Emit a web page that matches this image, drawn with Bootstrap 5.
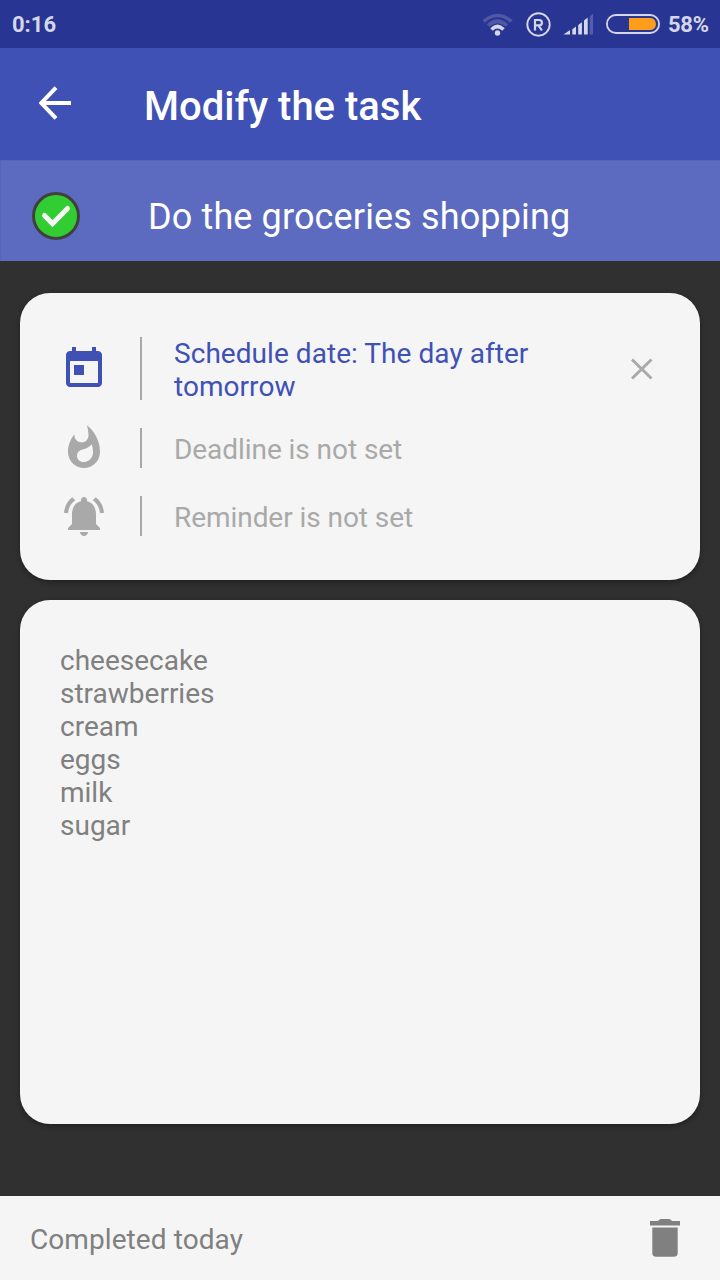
<!DOCTYPE html>
<html lang="en">
<head>
<meta charset="utf-8">
<meta name="viewport" content="width=device-width, initial-scale=1">
<title>Modify the task</title>
<link href="https://cdn.jsdelivr.net/npm/bootstrap@5.3.0/dist/css/bootstrap.min.css" rel="stylesheet">
<style>
  body { font-family: Roboto, sans-serif; background: #303030; height: 1280px; overflow: hidden; }
  svg { display: block; flex: none; }
  .status { height: 48px; background: #283593; color: #d4d7e9; font-size: 22px; font-weight: 700; line-height: 26px; padding: 2px 12px 0 12px; }
  .percent { width: 40px; margin-left: 8px; letter-spacing: -.3px; white-space: nowrap; }
  .appbar { height: 112px; background: #3f51b5; padding-left: 39px; }
  .appbar h1 { font-size: 40px; font-weight: 500; line-height: 48px; margin: 6px 0 0 72px; }
  .back { margin-top: -3px; }
  .task-title { height: 101px; background: #5c6bc0; padding-left: 32px; box-shadow: inset 1px 1px 0 #5565b9; }
  .task-title h2 { font-size: 36px; font-weight: 400; line-height: 44px; letter-spacing: .13px; margin: 12px 0 0 68px; }
  .task-check { margin-top: 11px; }
  .sheet { background: #f5f5f5; border: 0; border-radius: 30px; box-shadow: 0 2px 5px rgba(0,0,0,.35); }
  .dates { height: 287px; padding: 44px 46px 44px 40px; gap: 28px; color: #a9a9a9; font-size: 28px; line-height: 33px; }
  .entry { height: 40px; }
  .entry.tall { height: 63px; }
  .entry .rule { width: 2px; margin: 0 32px; background: #a9a9a9; }
  .label { padding-top: 2px; letter-spacing: -.06px; }
  .chosen { color: #3f51b5; letter-spacing: .05px; }
  .notes { height: 524px; padding: 44px 40px; color: #808080; font-size: 28px; line-height: 33px; }
  .bottom { height: 84px; background: #f5f5f5; color: #808080; font-size: 28px; line-height: 33px; letter-spacing: .08px; padding: 2px 40px 0 30px; }
  .trash { margin-top: -2px; }
</style>
</head>
<body class="d-flex flex-column">
  <div class="status d-flex align-items-center justify-content-between">
    <span>0:16</span>
    <div class="d-flex align-items-center">
      <svg width="124" height="28" viewBox="480 10 124 28" fill="none" stroke="#d4d7e9">
        <g stroke-width="3.6">
          <path d="M483.500 20.500Q497.500 8.500 511.500 20.500" opacity=".22"/>
          <path d="M488 24.500Q497.500 16 507 24.500" opacity=".22"/>
          <path d="M491.500 28.500Q497.500 22.500 503.500 28.500"/>
        </g>
        <circle cx="497.500" cy="32" r="2.700" fill="#d4d7e9" stroke="none"/>
        <circle cx="538.500" cy="23.500" r="11.200" stroke-width="1.900"/>
        <path d="M535 29.500V19h4.200a2.700 2.700 0 0 1 0 5.400H535M538.500 24.400l3.400 5.100" stroke-width="2.200"/>
        <g fill="#d4d7e9" stroke="none" transform="translate(0 -1)">
          <path d="M563.500 34.500l6.500-4.500v4.500zM572.300 29.200l3.700-2.600v7.900h-3.700zM578.200 25l3.700-2.800v12.300h-3.700zM584 20.400l3.700-2.900v17H584z"/>
          <path d="M589.700 16.500l3.300-2.500v20.500h-3.300z" opacity=".25"/>
        </g>
      </svg>
      <svg width="56" height="24" viewBox="604 13 56 24">
        <rect x="606.900" y="15" width="52.200" height="18" rx="9" fill="none" stroke="#d4d7e9" stroke-width="1.800"/>
        <path d="M629 18h20a6 6 0 0 1 7 6a6 6 0 0 1-7 6h-20z" fill="#ff9e1b"/>
      </svg>
      <span class="percent">58%</span>
    </div>
  </div>

  <header class="appbar d-flex align-items-center text-white">
    <svg class="back" width="33" height="34" viewBox="0 0 33 34" fill="none" stroke="#fff" stroke-width="4"><path d="M32 17H3M17 1.700L2.200 17 17 32.300"/></svg>
    <h1>Modify the task</h1>
  </header>

  <section class="task-title d-flex align-items-center text-white">
    <svg class="task-check" width="48" height="48" viewBox="0 0 48 48"><circle cx="24" cy="24" r="22.500" fill="#32cd32" stroke="#404040" stroke-width="3"/><path d="M12.500 23.500l8 8.200L35.500 16.500" fill="none" stroke="#f8f8f8" stroke-width="5" stroke-linecap="round"/></svg>
    <h2 class="task-name">Do the groceries shopping</h2>
  </section>

  <main class="d-flex flex-column flex-grow-1" style="padding:32px 20px 0;gap:20px">
    <div class="card sheet dates">
      <div class="entry tall d-flex">
        <svg class="align-self-center" width="48" height="48" viewBox="0 0 24 24" fill="#3f51b5"><path d="M19 3h-1V1h-2v2H8V1H6v2H5c-1.110 0-1.990.9-1.990 2L3 19c0 1.100.89 2 2 2h14c1.100 0 2-.9 2-2V5c0-1.100-.9-2-2-2zm0 16H5V8h14v11zM7 10h5v5H7z"/></svg>
        <div class="rule"></div>
        <div class="label chosen align-self-center flex-grow-1">Schedule date: The day after<br>tomorrow</div>
        <svg class="align-self-center" width="24" height="24" viewBox="0 0 24 24" fill="none" stroke="#a9a9a9" stroke-width="3"><path d="M2 2.500l19.500 19M21.500 2.500l-19.500 19"/></svg>
      </div>
      <div class="entry d-flex">
        <svg class="align-self-center" width="48" height="48" viewBox="0 0 24 24" fill="#a9a9a9"><path d="M13.500.67s.74 2.650.74 4.800c0 2.060-1.350 3.730-3.410 3.730-2.070 0-3.630-1.670-3.630-3.730l.03-.36C5.210 7.510 4 10.620 4 14c0 4.420 3.580 8 8 8s8-3.580 8-8C20 8.610 17.410 3.800 13.500.67zM11.710 19c-1.780 0-3.220-1.400-3.220-3.140 0-1.620 1.050-2.760 2.810-3.120 1.770-.36 3.600-1.210 4.620-2.580.39 1.290.59 2.650.59 4.040 0 2.650-2.150 4.800-4.800 4.800z"/></svg>
        <div class="rule"></div>
        <div class="label align-self-center">Deadline is not set</div>
      </div>
      <div class="entry d-flex">
        <svg class="align-self-center" width="48" height="48" viewBox="0 0 24 24" fill="#a9a9a9"><path d="M7.580 4.080L6.150 2.650C3.750 4.480 2.170 7.300 2.030 10.500h2c.15-2.650 1.510-4.970 3.550-6.420zm12.390 6.420h2c-.15-3.200-1.730-6.020-4.120-7.850l-1.420 1.430c2.020 1.450 3.390 3.770 3.540 6.420zM18 11c0-3.070-1.640-5.640-4.500-6.320V4c0-.83-.67-1.500-1.500-1.500s-1.500.67-1.500 1.500v.68C7.630 5.360 6 7.920 6 11v5l-2 2v1h16v-1l-2-2v-5zm-6 11c1.100 0 2-.9 2-2h-4c0 1.100.9 2 2 2z"/></svg>
        <div class="rule"></div>
        <div class="label align-self-center">Reminder is not set</div>
      </div>
    </div>
    <div class="card sheet notes">
      <div>cheesecake<br>strawberries<br>cream<br>eggs<br>milk<br>sugar</div>
    </div>
  </main>

  <footer class="bottom d-flex align-items-center justify-content-between">
    <span>Completed today</span>
    <svg class="trash" width="30" height="38" viewBox="0 0 30 38" fill="#808080"><path d="M0 2h8q1.500-2 3-2h8q1.500 0 3 2h8v4.600H0zM2.300 8.400h25.400V34a3.800 3.800 0 0 1-3.800 3.800H6.100A3.800 3.800 0 0 1 2.300 34z"/></svg>
  </footer>
<script src="https://cdn.jsdelivr.net/npm/bootstrap@5.3.0/dist/js/bootstrap.bundle.min.js"></script>
</body>
</html>
